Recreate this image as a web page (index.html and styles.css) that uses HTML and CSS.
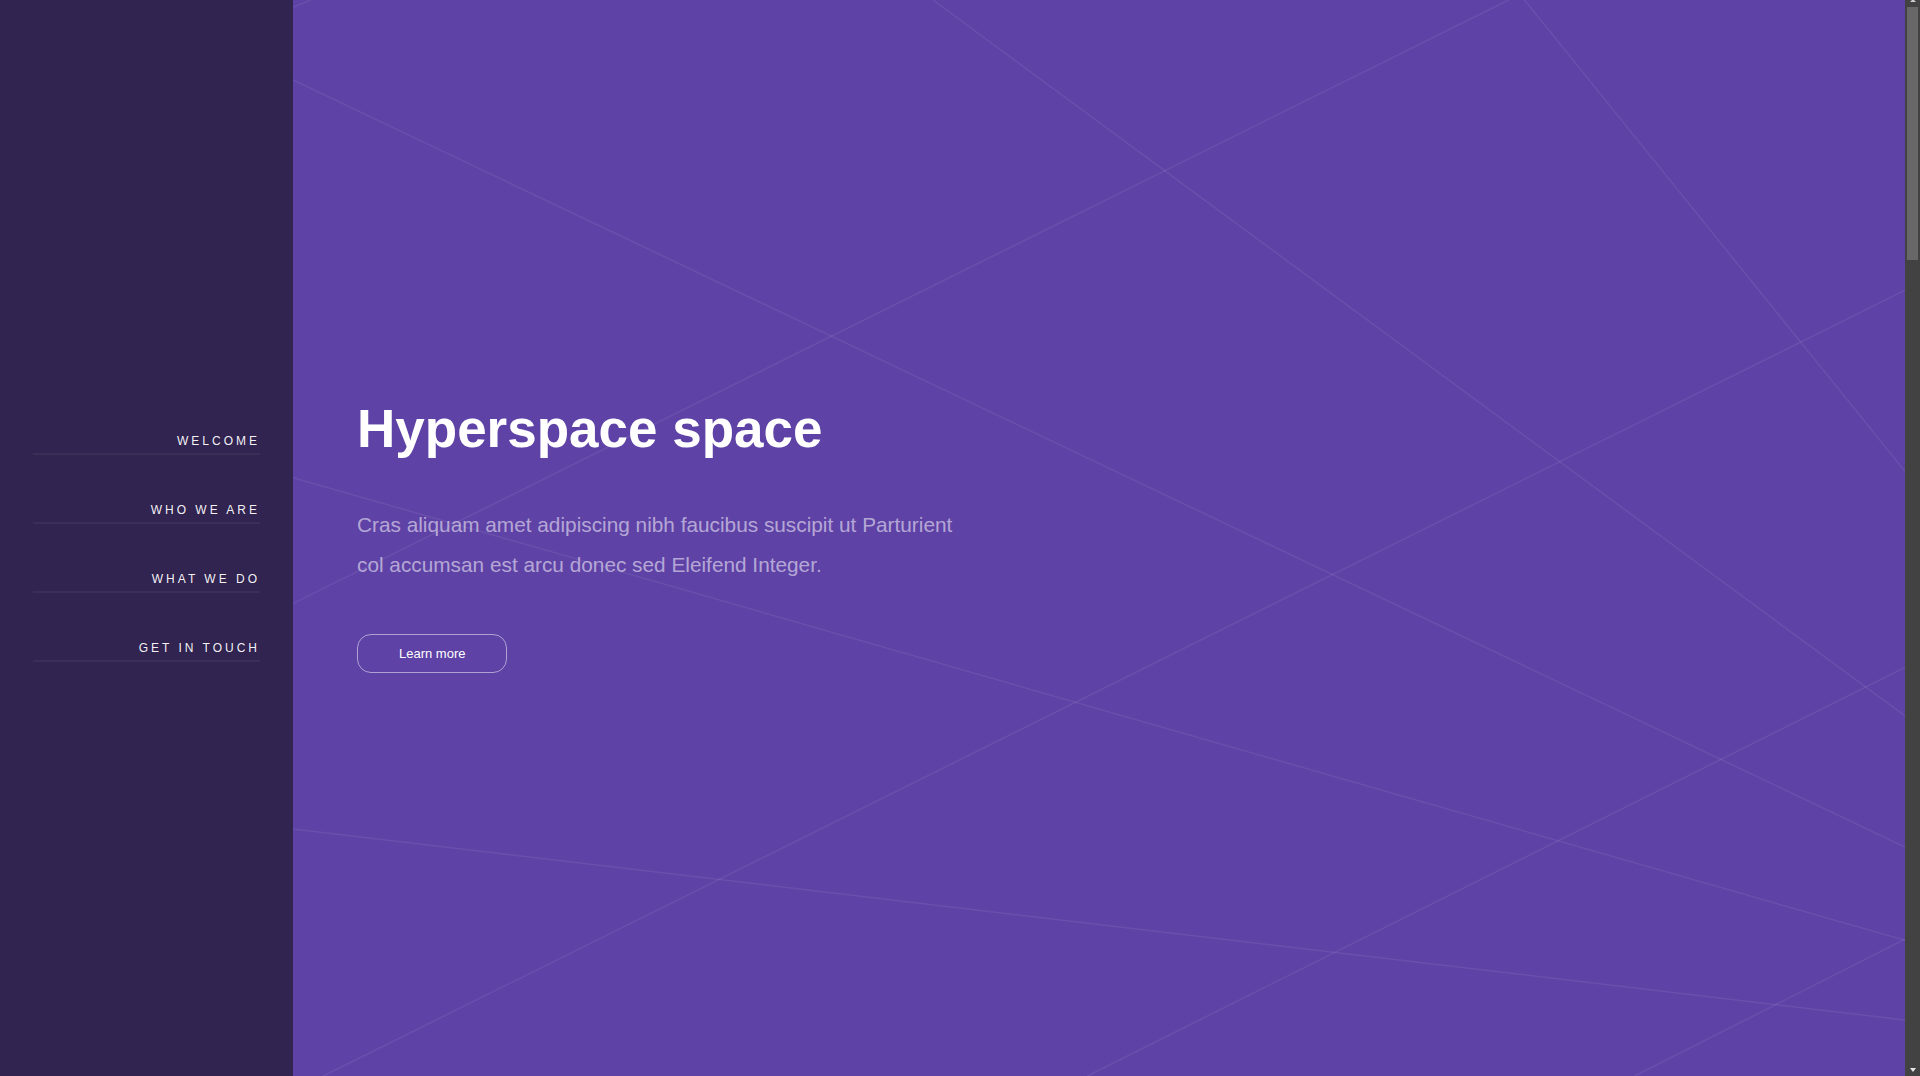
FILE: index.html
```html
<!DOCTYPE html>
<html lang="en">
<head>
<meta charset="utf-8">
<title>Hyperspace</title>
<link rel="stylesheet" href="styles.css">
</head>
<body>
<div class="page">
  <aside class="sidebar">
    <nav>
      <ul class="nav-list">
        <li><a href="#intro" class="nav-link">Welcome</a></li>
        <li><a href="#one" class="nav-link">Who we are</a></li>
        <li><a href="#two" class="nav-link">What we do</a></li>
        <li><a href="#three" class="nav-link">Get in touch</a></li>
      </ul>
    </nav>
  </aside>
  <main class="wrapper">
    <section id="intro" class="intro">
      <svg class="bg-lines" viewBox="293 0 1612 1076" preserveAspectRatio="none" aria-hidden="true">
        <g stroke="rgba(255,255,255,0.075)" stroke-width="1.5" fill="none">
          <line x1="293" y1="80" x2="1905" y2="847"/>
          <line x1="933" y1="0" x2="1905" y2="716"/>
          <line x1="1508.6" y1="0" x2="292.7" y2="603.7"/>
          <line x1="311" y1="0" x2="293" y2="7"/>
          <line x1="1524.5" y1="0" x2="1905" y2="471.4"/>
          <line x1="1905" y1="290.2" x2="323.3" y2="1076"/>
          <line x1="293" y1="477.6" x2="1905" y2="940.4"/>
          <line x1="293" y1="829" x2="1905" y2="1020"/>
          <line x1="1905" y1="667.4" x2="1087.4" y2="1076"/>
          <line x1="1905" y1="939.2" x2="1634.7" y2="1076"/>
        </g>
      </svg>
      <div class="intro-inner">
        <h1 class="intro-title">Hyperspace space</h1>
        <p class="intro-text">Cras aliquam amet adipiscing nibh faucibus suscipit ut Parturient col accumsan est arcu donec sed Eleifend Integer.</p>
        <div class="actions">
          <a href="#one" class="button">Learn more</a>
        </div>
      </div>
    </section>
  </main>
  <div class="scrollbar" aria-hidden="true">
    <span class="sb-arrow-up"></span>
    <span class="sb-thumb"></span>
    <span class="sb-space"></span>
    <span class="sb-arrow-down"></span>
  </div>
</div>
</body>
</html>
```

FILE: styles.css
```css
html, body {
  margin: 0;
  padding: 0;
}

body {
  background: #312450;
  font-family: "Liberation Sans", Arial, Helvetica, sans-serif;
  font-size: 17.33px;
  line-height: 1.75;
  color: rgba(255, 255, 255, 0.55);
  overflow: hidden;
}

.page {
  display: flex;
  height: 100vh;
}

.sidebar {
  flex: 0 0 293px;
  width: 293px;
  box-sizing: border-box;
  padding: 386px 33px 0;
  background: #312450;
}

.nav-list {
  list-style: none;
  margin: 0;
  padding: 0;
}

.nav-link {
  display: block;
  padding: 45px 0 2px;
  line-height: 20px;
  font-size: 12px;
  letter-spacing: 3px;
  text-transform: uppercase;
  text-align: right;
  text-decoration: none;
  color: rgba(255, 255, 255, 0.96);
  border-bottom: 2px solid rgba(255, 255, 255, 0.05);
}

.wrapper {
  flex: 1 1 auto;
  min-width: 0;
  display: flex;
}

.intro {
  position: relative;
  overflow: hidden;
  flex: 1 1 auto;
  box-sizing: border-box;
  display: flex;
  flex-direction: column;
  justify-content: center;
  padding: 0 64px 8px;
  background: #5e42a6;
}

.bg-lines {
  position: absolute;
  inset: 0;
  width: 100%;
  height: 100%;
  pointer-events: none;
}

.intro-inner {
  position: relative;
}

.intro-title {
  margin: 0 0 43px;
  font-size: 53px;
  line-height: 66px;
  font-weight: bold;
  color: #ffffff;
}

.intro-text {
  margin: 0 0 49px;
  max-width: 610px;
  font-size: 20.8px;
  line-height: 40px;
  color: rgba(255, 255, 255, 0.55);
}

.actions {
  display: flex;
}

.button {
  display: block;
  height: 39px;
  box-sizing: border-box;
  padding: 0 41px;
  line-height: 37px;
  font-size: 13px;
  color: #ffffff;
  text-decoration: none;
  border: 1px solid rgba(255, 255, 255, 0.5);
  border-radius: 14px;
}

/* page scrollbar */
.scrollbar {
  flex: 0 0 15px;
  width: 15px;
  background: #424242;
  display: flex;
  flex-direction: column;
  align-items: center;
}

.sb-arrow-up {
  display: block;
  width: 0;
  height: 0;
  margin-top: -1px;
  border-left: 3px solid transparent;
  border-right: 3px solid transparent;
  border-bottom: 3px solid #cfcfcf;
}

.sb-thumb {
  display: block;
  width: 11px;
  height: 253px;
  margin-top: 5px;
  background: #686868;
}

.sb-space {
  flex: 1 1 auto;
}

.sb-arrow-down {
  display: block;
  width: 0;
  height: 0;
  margin-bottom: 4px;
  border-left: 3px solid transparent;
  border-right: 3px solid transparent;
  border-top: 4px solid #e6e6e6;
}
```
